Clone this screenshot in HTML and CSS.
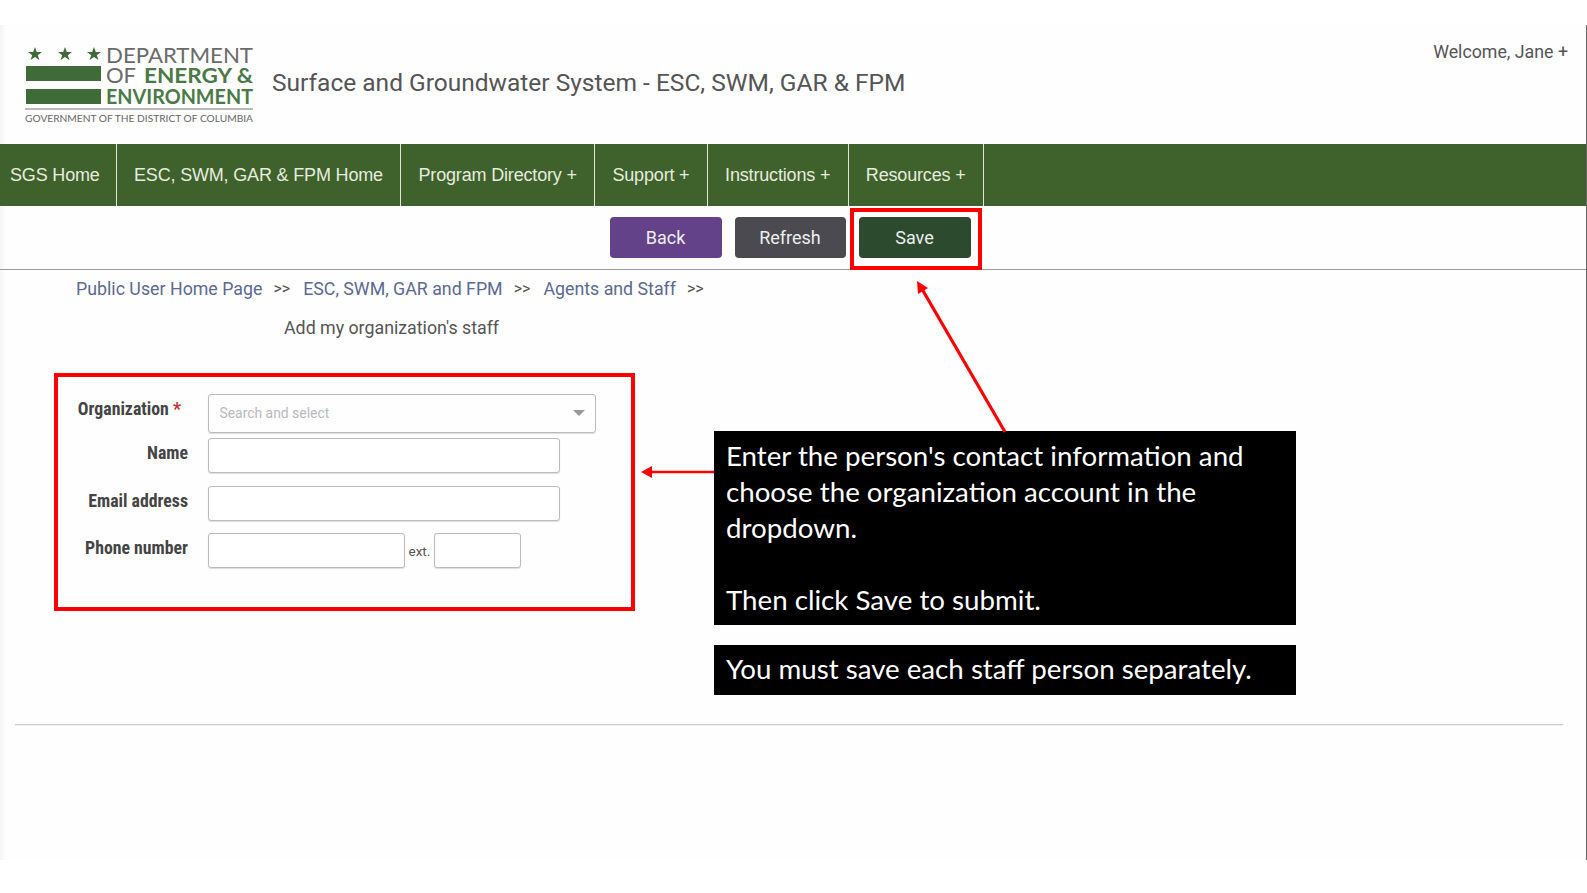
FILE: index.html
```html
<!DOCTYPE html>
<html>
<head>
    <title>Surface and Groundwater System</title>
    <link rel="stylesheet" href="styles.css">
</head>
<body>
    <div class="page">
        <header class="top">
            <svg class="logo" width="236" height="92" viewBox="0 -6 236 92">
                <g fill="#3f6b38">
                    <polygon points="10,2 11.8,7 17,7 12.8,10.2 14.4,15 10,12 5.6,15 7.2,10.2 3,7 8.2,7"/>
                    <polygon transform="translate(30 0)" points="10,2 11.8,7 17,7 12.8,10.2 14.4,15 10,12 5.6,15 7.2,10.2 3,7 8.2,7"/>
                    <polygon transform="translate(59 0)" points="10,2 11.8,7 17,7 12.8,10.2 14.4,15 10,12 5.6,15 7.2,10.2 3,7 8.2,7"/>
                    <rect x="1" y="21" width="75" height="15"/>
                    <rect x="1" y="44" width="75" height="15"/>
                </g>
                <text x="81" y="18" class="logo-line" textLength="147" lengthAdjust="spacingAndGlyphs">DEPARTMENT</text>
                <text x="81" y="38" class="logo-line" textLength="30" lengthAdjust="spacingAndGlyphs">OF</text>
                <text x="119" y="38" class="logo-line logo-strong" textLength="109" lengthAdjust="spacingAndGlyphs">ENERGY &amp;</text>
                <text x="81" y="59" class="logo-line logo-strong" textLength="147" lengthAdjust="spacingAndGlyphs">ENVIRONMENT</text>
                <rect x="0" y="63" width="228" height="2" fill="#b9b9b9"/>
                <text x="0" y="77" class="logo-small" textLength="228" lengthAdjust="spacingAndGlyphs">GOVERNMENT OF THE DISTRICT OF COLUMBIA</text>
            </svg>
            <div class="system-title">Surface and Groundwater System - ESC, SWM, GAR &amp; FPM</div>
            <div class="welcome">Welcome, Jane +</div>
        </header>

        <nav class="menu">
            <a class="first">SGS Home</a>
            <a>ESC, SWM, GAR &amp; FPM Home</a>
            <a>Program Directory +</a>
            <a>Support +</a>
            <a>Instructions +</a>
            <a>Resources +</a>
        </nav>

        <div class="toolbar">
            <button class="btn back">Back</button>
            <button class="btn refresh">Refresh</button>
            <button class="btn save">Save</button>
            <span class="save-mark"></span>
        </div>

        <div class="crumbs">
            <a>Public User Home Page</a><span>&gt;&gt;</span>
            <a>ESC, SWM, GAR and FPM</a><span>&gt;&gt;</span>
            <a>Agents and Staff</a><span>&gt;&gt;</span>
        </div>
        <div class="page-title">Add my organization's staff</div>

        <div class="main-row">
            <form class="staff-form">
                <div class="row row-org">
                    <label>Organization <em>*</em></label>
                    <div class="select">
                        <span>Search and select</span>
                        <i class="caret"></i>
                    </div>
                </div>
                <div class="row">
                    <label>Name</label>
                    <input type="text" class="wide">
                </div>
                <div class="row">
                    <label>Email address</label>
                    <input type="text" class="wide">
                </div>
                <div class="row">
                    <label>Phone number</label>
                    <input type="text" class="phone">
                    <span class="ext">ext.</span>
                    <input type="text" class="ext-input">
                </div>
            </form>

            <div class="notes">
                <div class="note note-main">
                    Enter the person's contact information and<br>
                    choose the organization account in the<br>
                    dropdown.<br>
                    <br>
                    Then click Save to submit.
                </div>
                <div class="note note-small">You must save each staff person separately.</div>
            </div>
        </div>

        <hr class="foot-line">
    </div>

    <svg class="arrows" width="1587" height="893" viewBox="0 0 1587 893">
        <line x1="1005" y1="432" x2="922" y2="289" stroke="#f00" stroke-width="3.2"/>
        <polygon points="917,281 928,288 918,294" fill="#f00"/>
        <line x1="714" y1="472" x2="648" y2="472" stroke="#f00" stroke-width="2.6"/>
        <polygon points="641,472 652,466 652,478" fill="#f00"/>
    </svg>
</body>
</html>
```

FILE: styles.css
```css
body {
    margin: 0;
    background: #fff;
    font-family: Roboto, sans-serif;
    color: #555;
}

.page {
    position: relative;
    box-sizing: border-box;
    width: 1587px;
    height: 835px;
    margin-top: 25px;
    background: #fefefe;
    border-right: 1px solid #666;
    box-shadow: inset 5px 0 5px -3px #f0f0f0;
}

.top {
    display: flex;
    align-items: flex-start;
    height: 119px;
    padding-left: 25px;
}

.logo {
    flex: none;
    margin-top: 14px;
}

.logo-line {
    font-family: Lato, sans-serif;
    font-size: 20.5px;
    fill: #6a6a6a;
}

.logo-strong {
    font-weight: 700;
    fill: #4a7a45;
}

.logo-small {
    font-family: Lato, sans-serif;
    font-size: 10px;
    fill: #666;
}

.system-title {
    margin: 42px 0 0 11px;
    font-size: 24.5px;
    line-height: 32px;
    color: #555;
}

.welcome {
    margin: 16px 18px 0 auto;
    font-size: 17.8px;
    line-height: 22px;
}

.menu {
    display: flex;
    height: 62px;
    background: #3f612b;
}

.menu a {
    padding: 0 17.3px;
    border-right: 1px solid #dfe6d8;
    font-family: "Liberation Sans", sans-serif;
    font-size: 18px;
    line-height: 62px;
    letter-spacing: -0.17px;
    color: #e6ecdf;
}

.menu a.first {
    padding: 0 16px 0 10px;
}

.toolbar {
    position: relative;
    display: flex;
    justify-content: center;
    gap: 13px;
    box-sizing: border-box;
    height: 64px;
    padding: 11px 6px 0 0;
    border-bottom: 1px solid #999;
}

.btn {
    width: 111px;
    height: 41px;
    border: 0;
    border-radius: 4px;
    font-family: Roboto, sans-serif;
    font-size: 18px;
    color: #eee;
}

.back {
    width: 112px;
    background: #63428a;
}

.refresh {
    background: #4a4a50;
}

.save {
    width: 112px;
    background: #2b4a2e;
}

.save-mark {
    position: absolute;
    left: 850px;
    top: 2px;
    box-sizing: border-box;
    width: 132px;
    height: 62px;
    border: 4.5px solid #f00;
}

.crumbs {
    display: flex;
    align-items: center;
    gap: 11px;
    height: 36px;
    padding-left: 76px;
    font-size: 17.8px;
    color: #5b6a92;
}

.crumbs span {
    color: #555;
    font-size: 16px;
    margin-right: 2px;
}

.page-title {
    margin: 11px 0 0 284px;
    font-size: 17.8px;
    line-height: 22px;
}

.main-row {
    display: flex;
    align-items: flex-start;
    height: 351px;
    margin-top: 34px;
    padding-left: 54px;
}

.staff-form {
    box-sizing: border-box;
    width: 581px;
    height: 238px;
    padding-top: 17px;
    border: 4.5px solid #f00;
}

.row {
    display: flex;
    align-items: center;
    margin-bottom: 12.5px;
}

.row-org {
    margin-bottom: 5px;
}

label {
    box-sizing: border-box;
    width: 130px;
    margin: -6px 19.5px 0 0;
    font-size: 17.8px;
    font-weight: 700;
    font-stretch: condensed;
    text-align: right;
    white-space: nowrap;
    color: #444;
}

.row-org label {
    margin-top: -10px;
    padding-right: 7px;
}

label em {
    color: #b33;
    font-style: normal;
}

.select {
    display: flex;
    align-items: center;
    justify-content: space-between;
    box-sizing: border-box;
    width: 388px;
    height: 39px;
    padding: 0 10px 2px 11px;
    border: 1px solid #bbb;
    border-radius: 3px;
    box-shadow: 0 1px 1px #ddd;
    font-size: 13.9px;
    color: #b9b9c0;
}

.caret {
    width: 0;
    height: 0;
    border-left: 6px solid transparent;
    border-right: 6px solid transparent;
    border-top: 6px solid #999;
}

input {
    box-sizing: border-box;
    height: 35px;
    border: 1px solid #bbb;
    border-radius: 3px;
    box-shadow: 0 1px 1px #ddd;
    background: #fff;
}

.wide {
    width: 352px;
}

.phone {
    width: 197px;
}

.ext {
    width: 29px;
    padding-left: 4px;
    box-sizing: border-box;
    font-size: 13.5px;
}

.ext-input {
    width: 87px;
}

.notes {
    margin: 58px 0 0 79px;
    width: 582px;
}

.note {
    box-sizing: border-box;
    padding-left: 12px;
    background: #000;
    color: #fff;
    font-family: Lato, sans-serif;
    font-size: 27.7px;
    line-height: 36px;
}

.note-main {
    height: 194px;
    padding-top: 7px;
    margin-bottom: 20px;
}

.note-small {
    height: 50px;
    padding-top: 6px;
}

.foot-line {
    margin: 0 23px 0 15px;
    border: 0;
    border-top: 1px solid #ccc;
    border-bottom: 1px solid #eee;
}

.arrows {
    position: absolute;
    left: 0;
    top: 0;
    pointer-events: none;
}
```
